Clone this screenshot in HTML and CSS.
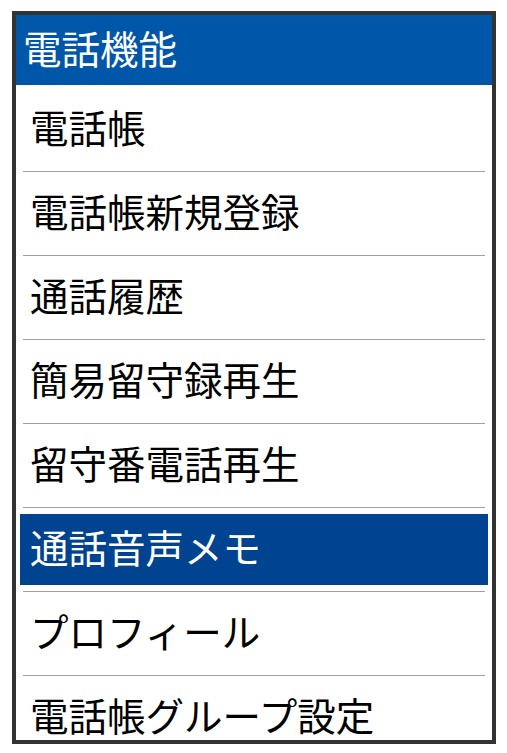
FILE: index.html
```html
<!DOCTYPE html>
<html lang="ja">
<head>
<meta charset="utf-8">
<title>電話機能</title>
<link rel="stylesheet" href="styles.css">
</head>
<body>
<div class="frame">
  <div class="header">電話機能</div>
  <ul class="menu">
    <li class="item"><span class="label">電話帳</span></li>
    <li class="item"><span class="label">電話帳新規登録</span></li>
    <li class="item"><span class="label">通話履歴</span></li>
    <li class="item"><span class="label">簡易留守録再生</span></li>
    <li class="item"><span class="label">留守番電話再生</span></li>
    <li class="item selected"><span class="label">通話音声メモ</span></li>
    <li class="item"><span class="label">プロフィール</span></li>
    <li class="item"><span class="label">電話帳グループ設定</span></li>
  </ul>
</div>
</body>
</html>
```
FILE: styles.css
```css
html, body {
  margin: 0;
  padding: 0;
  background: #ffffff;
}
body {
  font-family: "Noto Sans CJK JP", "Noto Sans", sans-serif;
  padding: 11px 0 0 12px;
}
.frame {
  width: 476px;
  height: 725px;
  border: 4px solid #333333;
  overflow: hidden;
  background: #ffffff;
}
.header {
  height: 70px;
  box-sizing: border-box;
  padding: 0 0 6px 7px;
  display: flex;
  align-items: center;
  background: #0056a9;
  color: #ffffff;
  font-size: 38.5px;
  line-height: 1;
  white-space: nowrap;
}
.menu {
  list-style: none;
  margin: 0;
  padding: 3px 0 0 0;
}
.item {
  height: 83px;
  margin: 0 7px;
  border-bottom: 1px solid #a0a0a0;
  display: flex;
  align-items: stretch;
}
.label {
  flex: 1;
  display: flex;
  align-items: center;
  padding: 0 0 6px 7px;
  font-size: 38.5px;
  line-height: 1;
  color: #000000;
  white-space: nowrap;
}
.item.selected .label {
  margin: 6px -3px;
  padding-left: 10px;
  background: #004390;
  color: #ffffff;
}
```
